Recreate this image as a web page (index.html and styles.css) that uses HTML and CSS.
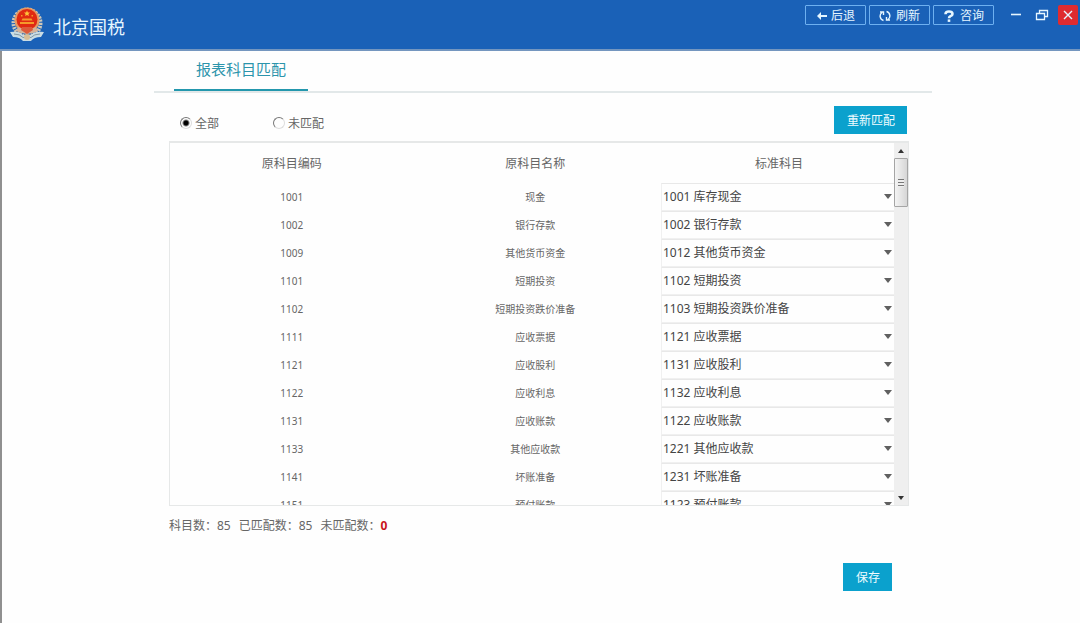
FILE: index.html
```html
<!DOCTYPE html>
<html lang="zh-CN">
<head>
<meta charset="utf-8">
<title>北京国税</title>
<link rel="stylesheet" href="styles.css">
</head>
<body>
<header class="topbar">
  <div class="brand">
    <svg class="emblem" viewBox="0 0 34 36" aria-hidden="true">
      <circle cx="17" cy="16" r="13.500" fill="none" stroke="#cfc7b8" stroke-width="4" stroke-dasharray="2 1"/>
      <circle cx="17" cy="13" r="12.500" fill="#e79a62"/>
      <circle cx="17" cy="12.500" r="10.500" fill="#e02a12"/>
      <path d="M17 3.500l.9 1.900 2.100.2-1.600 1.400.5 2.100-1.900-1.100-1.900 1.100.5-2.100L14 5.600l2.100-.2z" fill="#ffc23a"/>
      <path d="M11 8h1.500v1.500H11zM21.500 8H23v1.500h-1.500zM12.500 11.500h9l1 2h-11zM10 15h14v2H10z" fill="#f59a2a"/>
      <path d="M8 20q9 5 18 0l2 4q-11 6-22 0z" fill="#d6b49a"/>
      <path d="M12 20h10l1 3-6 4-6-4z" fill="#dc5a3a"/>
      <path d="M0 25q9-1 13 3h8q4-4 13-3l-3 5q-7 0-10 4h-8q-3-4-10-4z" fill="#c9dce4"/>
      <path d="M4 27q6 0 9 3.500h8q3-3.500 9-3.500" fill="none" stroke="#8499a4"/>
      <circle cx="17" cy="30" r="3" fill="#d7bf97"/>
    </svg>
    <h1 class="brand-name">北京国税</h1>
  </div>
  <div class="tools">
    <button class="tool" type="button">
      <svg class="tool-icon" viewBox="0 0 12 12" aria-hidden="true"><path d="M1 6l4-4v3h6v2H5v3z" fill="currentColor"/></svg>后退
    </button>
    <button class="tool tool-wide" type="button">
      <svg class="tool-icon" viewBox="0 0 12 12" aria-hidden="true"><path d="M4.500 10.500A4.500 4.500 0 0 1 3 2.500M7.500 1.500A4.500 4.500 0 0 1 9 9.500M1 2h3.500v3M11 10H7.500V7" fill="none" stroke="currentColor" stroke-width="1.400"/></svg>刷新
    </button>
    <button class="tool tool-wide" type="button">
      <svg class="tool-icon" viewBox="0 0 12 12" aria-hidden="true"><path d="M2.500 4.200Q2.500 1.500 6 1.500T9.500 4Q9.500 5.300 7.500 6.100 6 6.800 6 8.200" fill="none" stroke="currentColor" stroke-width="2.600"/><path d="M4.700 9.400h2.600v2.500H4.700z" fill="currentColor"/></svg>咨询
    </button>
    <div class="window-controls">
      <button class="win" type="button" aria-label="最小化"><svg class="win-icon" viewBox="0 0 14 14"><path d="M2 6.500h10" stroke="currentColor" stroke-width="1.600"/></svg></button>
      <button class="win" type="button" aria-label="还原"><svg class="win-icon" viewBox="0 0 14 14"><path d="M1.500 5.500h8v6h-8zM4.500 5V2.500h8v6H10" fill="none" stroke="currentColor" stroke-width="1.300"/></svg></button>
      <button class="win win-close" type="button" aria-label="关闭"><svg class="win-icon" viewBox="0 0 14 14"><path d="M3 3l8 8M11 3l-8 8" stroke="currentColor" stroke-width="1.400"/></svg></button>
    </div>
  </div>
</header>
<main class="page">
  <div class="content">
    <nav class="tabs"><a class="tab" href="#match">报表科目匹配</a></nav>
    <section class="match" id="match">
      <div class="filters">
        <label class="filter"><input class="radio" type="radio" name="scope" checked>全部</label>
        <label class="filter"><input class="radio" type="radio" name="scope">未匹配</label>
        <button class="primary rematch" type="button">重新匹配</button>
      </div>
      <div class="panel">
        <div class="viewport">
          <table class="subjects">
            <thead><tr><th>原科目编码</th><th>原科目名称</th><th class="standard-head">标准科目</th></tr></thead>
            <tbody>
              <tr><td>1001</td><td>现金</td><td class="standard"><div class="picker"><select class="select" aria-label="标准科目 1001"><option>1001 库存现金</option></select></div></td></tr>
              <tr><td>1002</td><td>银行存款</td><td class="standard"><div class="picker"><select class="select" aria-label="标准科目 1002"><option>1002 银行存款</option></select></div></td></tr>
              <tr><td>1009</td><td>其他货币资金</td><td class="standard"><div class="picker"><select class="select" aria-label="标准科目 1009"><option>1012 其他货币资金</option></select></div></td></tr>
              <tr><td>1101</td><td>短期投资</td><td class="standard"><div class="picker"><select class="select" aria-label="标准科目 1101"><option>1102 短期投资</option></select></div></td></tr>
              <tr><td>1102</td><td>短期投资跌价准备</td><td class="standard"><div class="picker"><select class="select" aria-label="标准科目 1102"><option>1103 短期投资跌价准备</option></select></div></td></tr>
              <tr><td>1111</td><td>应收票据</td><td class="standard"><div class="picker"><select class="select" aria-label="标准科目 1111"><option>1121 应收票据</option></select></div></td></tr>
              <tr><td>1121</td><td>应收股利</td><td class="standard"><div class="picker"><select class="select" aria-label="标准科目 1121"><option>1131 应收股利</option></select></div></td></tr>
              <tr><td>1122</td><td>应收利息</td><td class="standard"><div class="picker"><select class="select" aria-label="标准科目 1122"><option>1132 应收利息</option></select></div></td></tr>
              <tr><td>1131</td><td>应收账款</td><td class="standard"><div class="picker"><select class="select" aria-label="标准科目 1131"><option>1122 应收账款</option></select></div></td></tr>
              <tr><td>1133</td><td>其他应收款</td><td class="standard"><div class="picker"><select class="select" aria-label="标准科目 1133"><option>1221 其他应收款</option></select></div></td></tr>
              <tr><td>1141</td><td>坏账准备</td><td class="standard"><div class="picker"><select class="select" aria-label="标准科目 1141"><option>1231 坏账准备</option></select></div></td></tr>
              <tr><td>1151</td><td>预付账款</td><td class="standard"><div class="picker"><select class="select" aria-label="标准科目 1151"><option>1123 预付账款</option></select></div></td></tr>
            </tbody>
          </table>
        </div>
        <div class="scrollbar">
          <button class="scroll-step" type="button" aria-label="向上滚动"><svg class="scroll-arrow" viewBox="0 0 6 4"><path d="M0 4l3-4 3 4z" fill="#333"/></svg></button>
          <div class="thumb"><span class="grip"></span></div>
          <button class="scroll-step scroll-down" type="button" aria-label="向下滚动"><svg class="scroll-arrow" viewBox="0 0 6 4"><path d="M0 0l3 4 3-4z" fill="#333"/></svg></button>
        </div>
      </div>
      <p class="summary"><span>科目数：85</span><span>已匹配数：85</span><span>未匹配数：<b class="unmatched">0</b></span></p>
      <div class="actions"><button class="primary" type="button">保存</button></div>
    </section>
  </div>
</main>
</body>
</html>
```

FILE: styles.css
```css
* {
  box-sizing: border-box;
}

body {
  margin: 0;
  min-height: 100vh;
  display: flex;
  flex-direction: column;
  background: #fefefe;
  color: #666;
  font-family: "Noto Sans", "Noto Sans CJK SC", sans-serif;
  font-size: 12px;
  line-height: 16px;
}

button,
select {
  font: inherit;
  color: inherit;
  margin: 0;
  padding: 0;
  border: 0;
  background: none;
}

.topbar {
  display: flex;
  justify-content: space-between;
  align-items: flex-start;
  height: 51px;
  background: #1a61b7;
  border-bottom: 2px solid #7496bf;
  color: #e6f6ff;
}

.brand {
  display: flex;
  align-items: center;
  gap: 9px;
  padding: 7px 0 0 10px;
}

.emblem {
  width: 34px;
  height: 36px;
}

.brand-name {
  margin: 0;
  padding-top: 4px;
  font-size: 18px;
  line-height: 26px;
  font-weight: 400;
}

.tools {
  display: flex;
  align-items: center;
  gap: 3px;
  padding-top: 5px;
}

.tool {
  display: flex;
  align-items: center;
  justify-content: center;
  gap: 3px;
  width: 61px;
  height: 20px;
  padding-top: 2px;
  border: 1px solid #6eb0f0;
  border-radius: 1px;
}

.tool-wide {
  gap: 5px;
}

.tool-icon {
  width: 12px;
  height: 12px;
}

.window-controls {
  display: flex;
  gap: 6px;
  margin-left: 9px;
  margin-right: 2px;
}

.win {
  display: grid;
  place-items: center;
  width: 20px;
  height: 20px;
}

.win-icon {
  width: 14px;
  height: 14px;
}

.win-close {
  background: #df2b2f;
  border-radius: 2px;
}

.page {
  flex: 1;
  padding-left: 4px;
  border-left: 2px solid #909090;
}

.content {
  max-width: 778px;
  margin: 0 auto;
}

.tabs {
  display: flex;
  height: 42px;
  padding-left: 20px;
  border-bottom: 2px solid #e2e8e9;
}

.tab {
  height: 40px;
  padding: 7px 22px 0;
  border-bottom: 2px solid #2397ad;
  color: #2b94ab;
  font-size: 15px;
  line-height: 22px;
  text-decoration: none;
}

.match {
  padding: 13px 23px 0 15px;
}

.filters {
  display: flex;
  align-items: center;
  gap: 54px;
  padding: 0 2px 0 11px;
}

.filter {
  display: flex;
  align-items: center;
  gap: 3px;
  padding-top: 8px;
}

.radio {
  appearance: none;
  width: 12px;
  height: 12px;
  margin: 0 0 2px;
  border: 1px solid;
  border-color: #777 #ddd #ddd #777;
  border-radius: 50%;
}

.radio:checked {
  background: radial-gradient(circle, #000 0 2px, #fff 4px);
}

.primary {
  padding: 7px 12px 5px 13px;
  background: #0ba1cd;
  color: #effcff;
}

.rematch {
  margin-left: auto;
}

.panel {
  display: flex;
  height: 365px;
  margin-top: 7px;
  border: 1px solid #e6e8e8;
  border-top-width: 2px;
}

.viewport {
  flex: 1;
  overflow: hidden;
}

.subjects {
  width: 100%;
  table-layout: fixed;
  border-collapse: collapse;
  text-align: center;
}

.subjects th {
  height: 40px;
  padding: 2px 0 0;
  font-weight: 400;
}

.subjects td {
  height: 28px;
  padding: 0;
  font-size: 10px;
}

.subjects .standard-head {
  width: 237px;
  padding-left: 7px;
}

.subjects .standard {
  padding-left: 4px;
  color: #444;
  font-size: 12px;
}

.picker {
  display: grid;
  align-items: center;
  height: 28px;
  border: 1px solid #f0f0f0;
  border-top-color: #e8e8e8;
  border-right: 0;
}

.picker::after {
  content: "";
  grid-area: 1 / 1;
  justify-self: end;
  margin: 0 2px 2px 0;
  border: 4px solid transparent;
  border-top: 5px solid #606060;
  border-bottom: 0;
  pointer-events: none;
}

.select {
  grid-area: 1 / 1;
  appearance: none;
  width: 100%;
  height: 26px;
  padding-left: 1px;
}

.scrollbar {
  display: flex;
  flex-direction: column;
  width: 14px;
  background: #efefef;
}

.scroll-step {
  display: grid;
  place-items: center;
  height: 15px;
}

.scroll-down {
  margin-top: auto;
}

.scroll-arrow {
  width: 6px;
  height: 4px;
}

.thumb {
  display: grid;
  place-items: center;
  height: 49px;
  border: 1px solid #a5a5a5;
  border-radius: 1px;
  background: linear-gradient(90deg, #f4f4f4, #d6d6d6);
}

.grip {
  width: 6px;
  height: 8px;
  background: repeating-linear-gradient(#777 0 1px, #eee 1px 3px);
}

.summary {
  display: flex;
  gap: 8px;
  margin: 12px 0 0;
}

.unmatched {
  color: #c8141b;
}

.actions {
  display: flex;
  justify-content: flex-end;
  padding: 29px 17px 0 0;
}
```
